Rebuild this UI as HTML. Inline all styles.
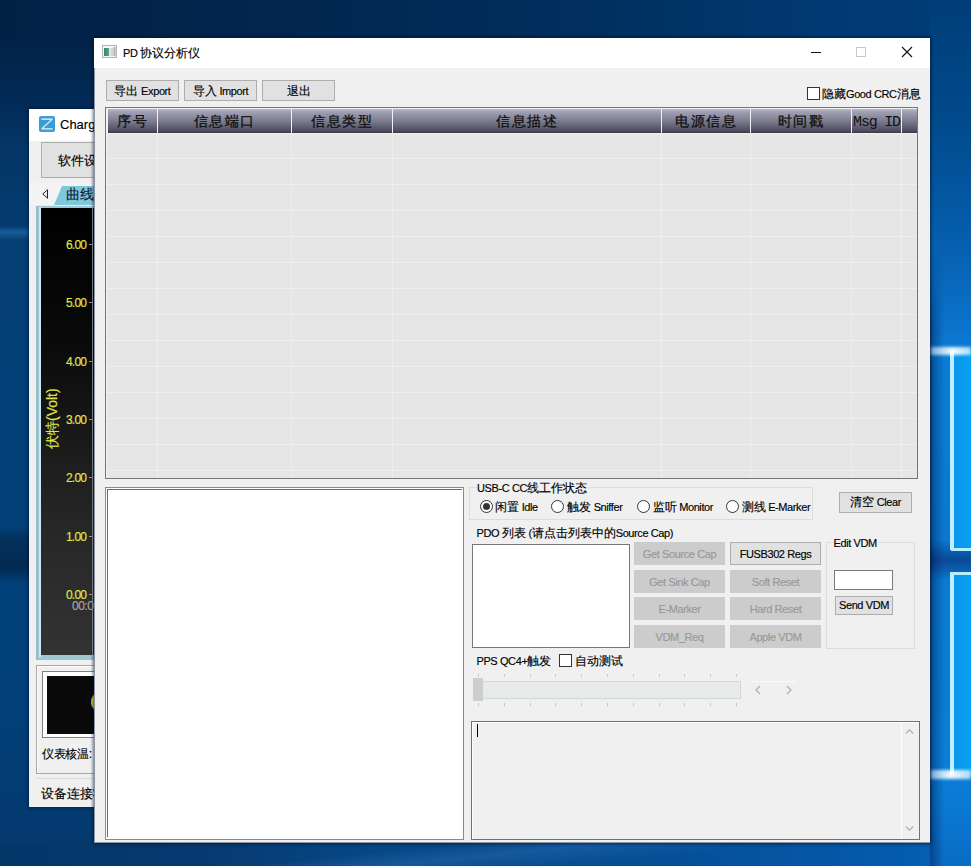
<!DOCTYPE html>
<html><head><meta charset="utf-8">
<style>
*{margin:0;padding:0;box-sizing:border-box}
html,body{width:971px;height:866px;overflow:hidden}
body{position:relative;font-family:"Liberation Sans",sans-serif;font-size:12px;color:#000;background:#03244a;-webkit-text-stroke:0.15px currentColor}
i{font-style:normal;font-size:11px;letter-spacing:-0.4px}
.a{position:absolute}
.t{position:absolute;white-space:nowrap;line-height:14px;transform-origin:0 50%}
.btn{position:absolute;background:#e1e1e1;border:1px solid #adadad;text-align:center;font-size:12px;white-space:nowrap}
.dbtn{position:absolute;background:#cccccc;color:#989898;text-align:center;line-height:24px;font-size:12px;white-space:nowrap}
.hd{position:absolute;top:109px;height:24px;line-height:24px;text-align:center;font-size:14px;letter-spacing:1.5px;text-indent:0;color:#111;white-space:nowrap;-webkit-text-stroke:0.3px #111}
.hdv{position:absolute;top:109px;width:1px;height:24px;background:#f2f2f6}
.gl{background:#efefef}
.radio{position:absolute;width:13px;height:13px;border:1px solid #333;border-radius:50%;background:#fff}
.chk{position:absolute;width:13px;height:13px;border:1px solid #333;background:#fff}
.tk{width:1px;height:3px;background:#c8c8c8}
</style></head><body>
<!-- desktop -->
<div class="a" style="left:0;top:0;width:971px;height:866px;background:linear-gradient(90deg,#012145 0%,#02264f 30%,#002f5e 60%,#003a72 85%,#003d78 100%)"></div>
<!-- left band -->
<div class="a" style="left:0;top:38px;width:94px;height:828px;background:linear-gradient(180deg,#012246 0px,#022a56 60px,#043666 110px,#053c70 188px,#1a5c98 194px,#063f74 202px,#034076 300px,#023f76 490px,#03305c 500px,#022a52 530px,#02407a 545px,#02407a 640px,#033c72 760px,#05386c 828px)"></div>
<!-- bottom band -->
<div class="a" style="left:0;top:843px;width:971px;height:23px;background:linear-gradient(90deg,#05366a 0%,#063a70 20%,#074684 38%,#064886 50%,#054f98 70%,#055aaa 90%,#0562b8 100%)"></div>
<div class="a" style="left:200px;top:843px;width:520px;height:23px;background:linear-gradient(174deg,rgba(40,110,180,0) 35%,rgba(40,110,180,0.45) 55%,rgba(40,110,180,0) 80%)"></div>
<!-- right band -->
<div class="a" style="left:930px;top:0;width:41px;height:866px;background:linear-gradient(180deg,#003d78 0px,#014a8c 120px,#0660b0 250px,#0a74cc 330px,#0a7cd6 351px,#0a78d2 540px,#0a5aa8 552px,#0a4a98 560px,#0a5aa8 568px,#0a7ad4 580px,#0a7ed8 774px,#0a7ad4 800px,#0a6cc4 866px)"></div>
<div class="a" style="left:930px;top:250px;width:14px;height:616px;background:linear-gradient(90deg,rgba(0,20,70,0.45),rgba(0,20,70,0));-webkit-mask-image:linear-gradient(180deg,transparent 0,#000 80px)"></div>
<div class="a" style="left:953px;top:351px;width:18px;height:198px;background:linear-gradient(90deg,#0a94ea,#06a0f2)"></div>
<div class="a" style="left:952px;top:573px;width:19px;height:201px;background:linear-gradient(90deg,#0a94ea,#06a0f2)"></div>
<div class="a" style="left:950px;top:351px;width:4px;height:199px;background:#bfefff;filter:blur(0.6px)"></div>
<div class="a" style="left:951px;top:548px;width:20px;height:3px;background:#b8ecff;filter:blur(0.5px)"></div>
<div class="a" style="left:950px;top:572px;width:4px;height:203px;background:#bfefff;filter:blur(0.6px)"></div>
<div class="a" style="left:951px;top:572px;width:20px;height:3px;background:#b8ecff;filter:blur(0.5px)"></div>
<div class="a" style="left:930px;top:347px;width:41px;height:8px;background:linear-gradient(90deg,rgba(220,240,255,0.5),rgba(255,255,255,0.95) 55%,rgba(210,240,255,0.8));filter:blur(1.5px)"></div>
<div class="a" style="left:930px;top:770px;width:41px;height:9px;background:linear-gradient(90deg,rgba(220,240,255,0.5),rgba(255,255,255,0.95) 50%,rgba(210,240,255,0.8));filter:blur(1.5px)"></div>

<!-- background window -->
<div class="a" style="left:29px;top:109px;width:70px;height:698px;background:#f0f0f0;box-shadow:0 0 3px 1px rgba(0,8,25,0.5)"></div>
<div class="a" style="left:29px;top:109px;width:70px;height:698px;background:#f0f0f0;overflow:hidden">
  <div class="a" style="left:0;top:0;width:70px;height:32px;background:#fff"></div>
  <svg class="a" style="left:10px;top:7px" width="16" height="16" viewBox="0 0 16 16"><rect x="0" y="0" width="16" height="16" rx="2" fill="#3a9dd3"/><path d="M2.5 2.5H13.5V3.8L4.2 12.3H13.5V13.6H2.5V12.3L11.8 3.8H2.5Z" fill="#e8f6ff"/></svg>
  <div class="t" style="left:31px;top:8px;font-size:13px;line-height:15px">Charger</div>
  <div class="a" style="left:12px;top:33px;width:80px;height:36px;background:#e1e1e1;border:1px solid #adadad"></div>
  <div class="t" style="left:29px;top:45px;font-size:12.5px;line-height:15px">软件设置</div>
  <div class="a" style="left:0;top:74px;width:70px;height:22px;background:#f4f4f4"></div>
  <svg class="a" style="left:13px;top:80px" width="6" height="10" viewBox="0 0 6 10"><path d="M5.5 0.8L0.8 5L5.5 9.2Z" fill="none" stroke="#222" stroke-width="1"/></svg>
  <svg class="a" style="left:25px;top:77px" width="50" height="19" viewBox="0 0 50 19"><path d="M0 19L8 0H50V19Z" fill="#7fc8dc"/></svg>
  <div class="t" style="left:37px;top:77px;font-size:14px;line-height:16px;color:#102030">曲线图</div>
  <!-- plot frame -->
  <div class="a" style="left:7px;top:96px;width:70px;height:455px;background:#a0c8d4;border-top:1px solid #d8f0f8;box-shadow:inset 2px 0 0 #98bcc8"></div>
  <div class="a" style="left:10px;top:98px;width:2px;height:450px;background:#c4ecf4"></div>
  <div class="a" style="left:12px;top:99px;width:60px;height:447px;background:linear-gradient(180deg,#000 0%,#0a0a0a 30%,#262626 70%,#333 100%)"></div>
  <div class="a" style="left:63px;top:99px;width:1px;height:447px;background:#9a9a9a"></div>
  <div class="t" style="left:37px;top:129.0px;font-size:12px;color:#e0e848;letter-spacing:-0.8px">6.00</div><div class="a" style="left:60px;top:135px;width:4px;height:1px;background:#9a9a9a"></div>
  <div class="t" style="left:37px;top:187.3px;font-size:12px;color:#e0e848;letter-spacing:-0.8px">5.00</div><div class="a" style="left:60px;top:193px;width:4px;height:1px;background:#9a9a9a"></div>
  <div class="t" style="left:37px;top:245.6px;font-size:12px;color:#e0e848;letter-spacing:-0.8px">4.00</div><div class="a" style="left:60px;top:252px;width:4px;height:1px;background:#9a9a9a"></div>
  <div class="t" style="left:37px;top:304.0px;font-size:12px;color:#e0e848;letter-spacing:-0.8px">3.00</div><div class="a" style="left:60px;top:310px;width:4px;height:1px;background:#9a9a9a"></div>
  <div class="t" style="left:37px;top:362.3px;font-size:12px;color:#e0e848;letter-spacing:-0.8px">2.00</div><div class="a" style="left:60px;top:368px;width:4px;height:1px;background:#9a9a9a"></div>
  <div class="t" style="left:37px;top:420.6px;font-size:12px;color:#e0e848;letter-spacing:-0.8px">1.00</div><div class="a" style="left:60px;top:427px;width:4px;height:1px;background:#9a9a9a"></div>
  <div class="t" style="left:37px;top:478.9px;font-size:12px;color:#e0e848;letter-spacing:-0.8px">0.00</div><div class="a" style="left:60px;top:485px;width:4px;height:1px;background:#9a9a9a"></div>
  <div class="t" style="left:43px;top:490px;font-size:12px;color:#a8a8a8;letter-spacing:-0.5px">00:00</div>
  <div class="t" style="font-size:14px;line-height:16px;color:#e0e848;transform:rotate(-90deg);transform-origin:0 0;top:340px;left:15px">伏特(Volt)</div>
  <!-- group panel -->
  <div class="a" style="left:7px;top:556px;width:70px;height:109px;border:1px solid #a8a8a8;box-shadow:inset 1px 1px 0 #fff"></div>
  <div class="a" style="left:13px;top:562px;width:60px;height:67px;background:#fff;border:1px solid #808080"></div>
  <div class="a" style="left:18px;top:567px;width:60px;height:58px;background:#0a0a0a"></div>
  <div class="a" style="left:62px;top:582px;width:22px;height:22px;border-radius:50%;background:#c8d020"></div>
  <div class="t" style="left:13px;top:638px;font-size:12px;line-height:15px;letter-spacing:-0.3px">仪表核温:</div>
  <div class="a" style="left:7px;top:669px;width:70px;height:1px;background:#dcdcdc"></div>
  <div class="t" style="left:12px;top:677px;font-size:13px;line-height:15px">设备连接状态</div>
</div>

<!-- ===== main window ===== -->
<div class="a" style="left:94px;top:38px;width:836px;height:805px;background:#8a96a6;box-shadow:0 0 3px 1px rgba(0,8,25,0.6)"></div>
<div class="a" style="left:95px;top:38px;width:835px;height:804px;background:#f0f0f0"></div>
<div class="a" style="left:94px;top:38px;width:836px;height:30px;background:#fff"></div>
<!-- icon -->
<svg class="a" style="left:102px;top:45px" width="15" height="13" viewBox="0 0 15 13"><defs><linearGradient id="ig" x1="0" x2="1"><stop offset="0" stop-color="#3a8474"/><stop offset="1" stop-color="#62a090"/></linearGradient><linearGradient id="ig2" x1="0" x2="1"><stop offset="0" stop-color="#e6eeec"/><stop offset="1" stop-color="#c8d0d0"/></linearGradient></defs><rect x="0.5" y="0.5" width="14" height="12" fill="#f4f6f6" stroke="#b4b4b4"/><rect x="2" y="3" width="5" height="8" fill="url(#ig)"/><rect x="7" y="3" width="4" height="8" fill="url(#ig2)"/><rect x="11.5" y="2" width="2" height="9" fill="#a8b0b0"/></svg>
<!-- min / max / close -->
<div class="a" style="left:811px;top:52px;width:10px;height:1px;background:#111"></div>
<div class="a" style="left:856px;top:47px;width:10px;height:10px;border:1px solid #c8c8c8"></div>
<svg class="a" style="left:901px;top:46px" width="12" height="12" viewBox="0 0 12 12"><path d="M1 1L11 11M11 1L1 11" stroke="#111" stroke-width="1.1"/></svg>

<!-- top buttons -->
<div class="btn" style="left:106px;top:80px;width:73px;height:21px;line-height:20px">导出<i> Export</i></div>
<div class="btn" style="left:184px;top:80px;width:73px;height:21px;line-height:20px">导入<i> Import</i></div>
<div class="btn" style="left:262px;top:80px;width:73px;height:21px;line-height:20px">退出</div>
<div class="chk" style="left:807px;top:87px"></div>

<!-- table -->
<div class="a" style="left:105px;top:107px;width:813px;height:372px;border:1px solid #767678;background:#f2f2f4"></div>
<div class="a" style="left:107px;top:134px;width:810px;height:344px;background:#e6e6e6"></div>
<div class="a" style="left:108px;top:109px;width:809px;height:24px;background:linear-gradient(180deg,#b6b9c6 0%,#a0a0b4 12%,#7c7c8e 50%,#4e4e60 90%,#36363f 100%)"></div>
<div class="a gl" style="left:106px;top:158px;width:811px;height:1px"></div>
<div class="a gl" style="left:106px;top:184px;width:811px;height:1px"></div>
<div class="a gl" style="left:106px;top:210px;width:811px;height:1px"></div>
<div class="a gl" style="left:106px;top:236px;width:811px;height:1px"></div>
<div class="a gl" style="left:106px;top:262px;width:811px;height:1px"></div>
<div class="a gl" style="left:106px;top:288px;width:811px;height:1px"></div>
<div class="a gl" style="left:106px;top:314px;width:811px;height:1px"></div>
<div class="a gl" style="left:106px;top:340px;width:811px;height:1px"></div>
<div class="a gl" style="left:106px;top:366px;width:811px;height:1px"></div>
<div class="a gl" style="left:106px;top:392px;width:811px;height:1px"></div>
<div class="a gl" style="left:106px;top:418px;width:811px;height:1px"></div>
<div class="a gl" style="left:106px;top:444px;width:811px;height:1px"></div>
<div class="a gl" style="left:106px;top:470px;width:811px;height:1px"></div>
<div class="a gl" style="left:157px;top:134px;width:1px;height:344px"></div>
<div class="a gl" style="left:291px;top:134px;width:1px;height:344px"></div>
<div class="a gl" style="left:392px;top:134px;width:1px;height:344px"></div>
<div class="a gl" style="left:661px;top:134px;width:1px;height:344px"></div>
<div class="a gl" style="left:750px;top:134px;width:1px;height:344px"></div>
<div class="a gl" style="left:851px;top:134px;width:1px;height:344px"></div>
<div class="a gl" style="left:901px;top:134px;width:1px;height:344px"></div>
<div class="hdv" style="left:157px"></div><div class="hdv" style="left:291px"></div><div class="hdv" style="left:392px"></div><div class="hdv" style="left:661px"></div><div class="hdv" style="left:750px"></div><div class="hdv" style="left:851px"></div><div class="hdv" style="left:901px"></div>
<div class="hd" style="left:108px;width:49px">序号</div>
<div class="hd" style="left:158px;width:133px">信息端口</div>
<div class="hd" style="left:292px;width:100px">信息类型</div>
<div class="hd" style="left:393px;width:268px">信息描述</div>
<div class="hd" style="left:662px;width:88px">电源信息</div>
<div class="hd" style="left:751px;width:100px">时间戳</div>
<div class="hd" style="left:852px;top:110.5px;width:49px;font-family:'Liberation Mono',monospace;font-size:15px;letter-spacing:-1.2px;text-indent:0;-webkit-text-stroke:0">Msg ID</div>

<!-- log box -->
<div class="a" style="left:105px;top:487px;width:359px;height:353px;border:1px solid #8a8a8a;background:#fff"></div>
<div class="a" style="left:107px;top:489px;width:355px;height:1px;background:#6a6a6a"></div>
<div class="a" style="left:107px;top:489px;width:1px;height:348px;background:#6a6a6a"></div>

<!-- USB-C groupbox -->
<div class="a" style="left:469px;top:487px;width:344px;height:33px;border:1px solid #dcdcdc"></div>
<div class="radio" style="left:480px;top:500px"></div>
<div class="a" style="left:483px;top:503px;width:7px;height:7px;border-radius:50%;background:#333"></div>
<div class="radio" style="left:551px;top:500px"></div>
<div class="radio" style="left:637px;top:500px"></div>
<div class="radio" style="left:726px;top:500px"></div>
<div class="btn" style="left:839px;top:492px;width:73px;height:21px;line-height:19px">清空<i> Clear</i></div>

<!-- PDO -->
<div class="a" style="left:472px;top:544px;width:158px;height:104px;border:1px solid #777;background:#fff"></div>
<div class="dbtn" style="left:634px;top:542px;width:91px;height:23px"><i>Get Source Cap</i></div>
<div class="btn" style="left:730px;top:542px;width:91px;height:23px;line-height:22px"><i>FUSB302 Regs</i></div>
<div class="dbtn" style="left:634px;top:570px;width:91px;height:23px"><i>Get Sink Cap</i></div>
<div class="dbtn" style="left:730px;top:570px;width:91px;height:23px"><i>Soft Reset</i></div>
<div class="dbtn" style="left:634px;top:597px;width:91px;height:23px"><i>E-Marker</i></div>
<div class="dbtn" style="left:730px;top:597px;width:91px;height:23px"><i>Hard Reset</i></div>
<div class="dbtn" style="left:634px;top:625px;width:91px;height:23px"><i>VDM_Req</i></div>
<div class="dbtn" style="left:730px;top:625px;width:91px;height:23px"><i>Apple VDM</i></div>

<!-- Edit VDM -->
<div class="a" style="left:826px;top:542px;width:89px;height:107px;border:1px solid #dcdcdc"></div>
<div class="a" style="left:834px;top:570px;width:59px;height:20px;border:1px solid #7a7a7a;background:#fff"></div>
<div class="btn" style="left:835px;top:596px;width:58px;height:19px;line-height:17px"><i>Send VDM</i></div>

<!-- PPS -->
<div class="chk" style="left:559px;top:654px"></div>
<div class="a tk" style="left:478px;top:674px"></div><div class="a tk" style="left:478px;top:703px"></div>
<div class="a tk" style="left:504px;top:674px"></div><div class="a tk" style="left:504px;top:703px"></div>
<div class="a tk" style="left:530px;top:674px"></div><div class="a tk" style="left:530px;top:703px"></div>
<div class="a tk" style="left:555px;top:674px"></div><div class="a tk" style="left:555px;top:703px"></div>
<div class="a tk" style="left:581px;top:674px"></div><div class="a tk" style="left:581px;top:703px"></div>
<div class="a tk" style="left:607px;top:674px"></div><div class="a tk" style="left:607px;top:703px"></div>
<div class="a tk" style="left:633px;top:674px"></div><div class="a tk" style="left:633px;top:703px"></div>
<div class="a tk" style="left:659px;top:674px"></div><div class="a tk" style="left:659px;top:703px"></div>
<div class="a tk" style="left:684px;top:674px"></div><div class="a tk" style="left:684px;top:703px"></div>
<div class="a tk" style="left:710px;top:674px"></div><div class="a tk" style="left:710px;top:703px"></div>
<div class="a tk" style="left:736px;top:674px"></div><div class="a tk" style="left:736px;top:703px"></div>
<div class="a" style="left:473px;top:681px;width:268px;height:18px;border:1px solid #d6d6d6;background:#e7eaea"></div>
<div class="a" style="left:473px;top:678px;width:10px;height:23px;background:#cdcdcd"></div>
<div class="a" style="left:750px;top:681px;width:46px;height:1px;background:#fafafa"></div>
<svg class="a" style="left:754px;top:685px" width="8" height="10" viewBox="0 0 8 10"><path d="M6 1L2 5L6 9" fill="none" stroke="#b0b0b0" stroke-width="1.3"/></svg>
<svg class="a" style="left:785px;top:685px" width="8" height="10" viewBox="0 0 8 10"><path d="M2 1L6 5L2 9" fill="none" stroke="#b0b0b0" stroke-width="1.3"/></svg>

<!-- textarea -->
<div class="a" style="left:471px;top:721px;width:449px;height:119px;border:1px solid #3c7fb1;background:#f0f0f0"></div>
<div class="a" style="left:472px;top:722px;width:447px;height:117px;border:1px solid #fff;border-right:none;border-bottom:none"></div>
<div class="a" style="left:901px;top:722px;width:1px;height:117px;background:#fff"></div>
<div class="a" style="left:477px;top:724px;width:1px;height:13px;background:#000"></div>
<svg class="a" style="left:905px;top:728px" width="9" height="7" viewBox="0 0 9 7"><path d="M0.8 5.5L4.5 1.8L8.2 5.5" fill="none" stroke="#b4b4b4" stroke-width="1.4"/></svg>
<svg class="a" style="left:905px;top:825px" width="9" height="7" viewBox="0 0 9 7"><path d="M0.8 1.5L4.5 5.2L8.2 1.5" fill="none" stroke="#b4b4b4" stroke-width="1.4"/></svg>

<div class="t" id="t0" style="left:123px;top:46px;"><i>PD </i>协议分析仪</div>
<div class="t" id="t1" style="left:822px;top:87px;">隐藏<i>Good CRC</i>消息</div>
<div class="t" id="t2" style="left:477px;top:481px;background:#f0f0f0;padding-right:2px"><i>USB-C CC</i>线工作状态</div>
<div class="t" id="t3" style="left:495px;top:500px;">闲置<i> Idle</i></div>
<div class="t" id="t4" style="left:567px;top:500px;">触发<i> Sniffer</i></div>
<div class="t" id="t5" style="left:652.5px;top:500px;">监听<i> Monitor</i></div>
<div class="t" id="t6" style="left:741.5px;top:500px;">测线<i> E-Marker</i></div>
<div class="t" id="t7" style="left:476.5px;top:526px;"><i>PDO </i>列表<i> (</i>请点击列表中的<i>Source Cap)</i></div>
<div class="t" id="t8" style="left:833.5px;top:536px;background:#f0f0f0;padding-right:2px"><i>Edit VDM</i></div>
<div class="t" id="t9" style="left:476.5px;top:653.5px;"><i>PPS QC4+</i>触发</div>
<div class="t" id="t10" style="left:575.3px;top:653.5px;">自动测试</div>
</body></html>
